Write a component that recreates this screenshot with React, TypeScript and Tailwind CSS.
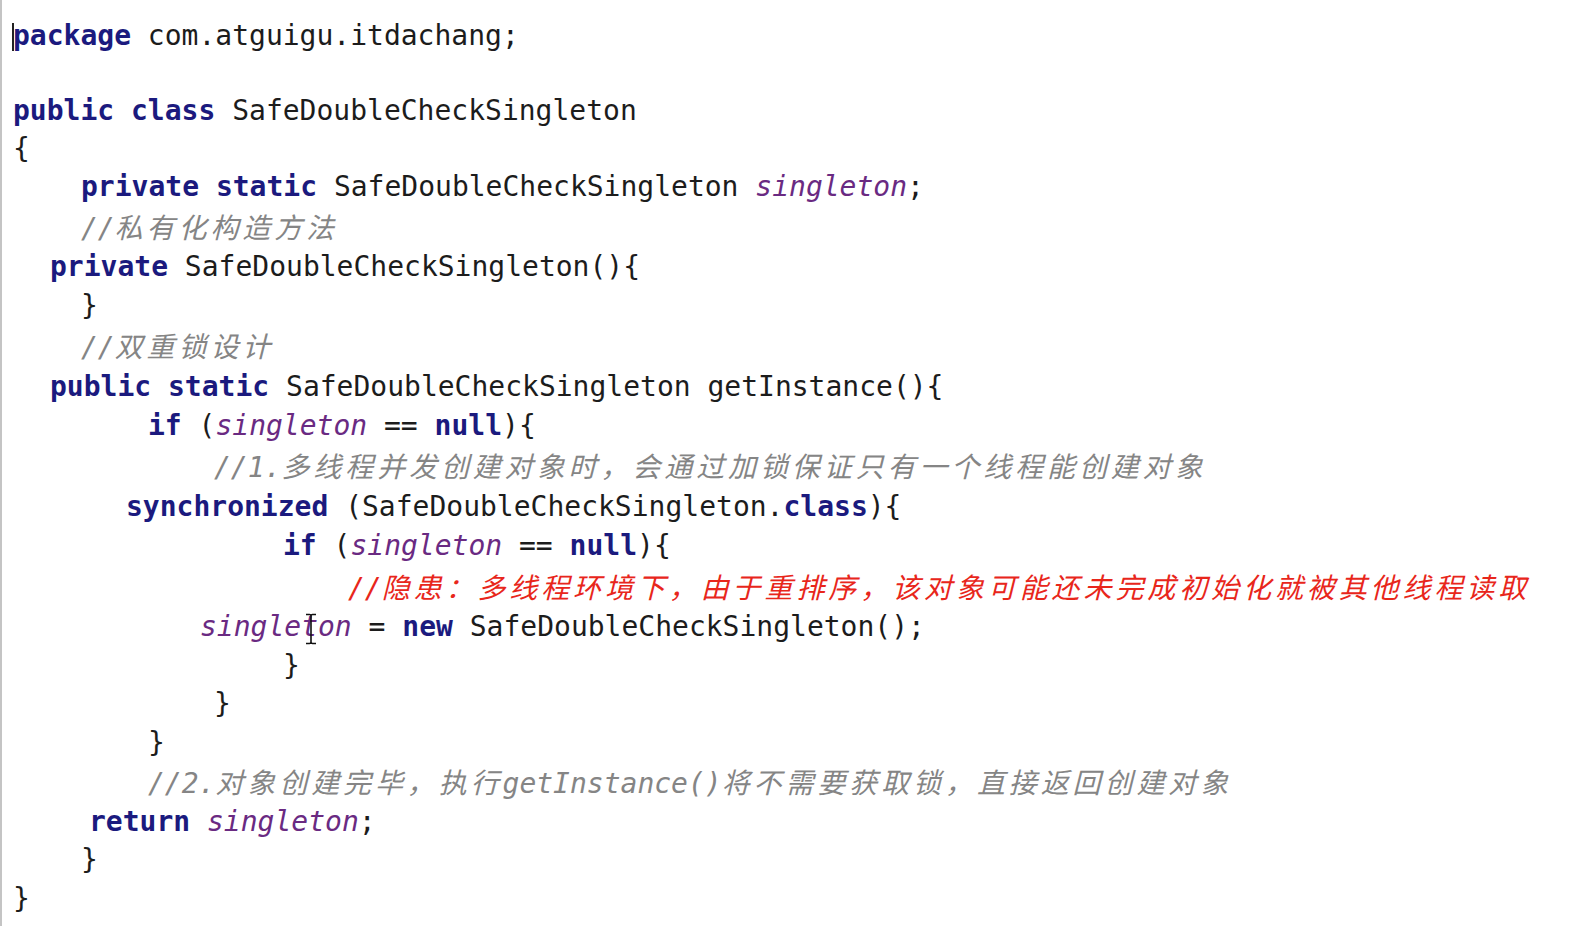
import React from 'react';

type Kind = 'kw' | 'fld' | 'cm' | 'red' | 'pl';
type Tok = [string, Kind];
type Line = { indent: number; y: number; toks: Tok[] };

const KIND_CLASS: Record<Kind, string> = {
  kw: 'font-bold text-[#1b1a7e]',
  fld: 'italic text-[#6a2a82]',
  cm: 'italic text-[#858585]',
  red: 'italic text-[#e8261b]',
  pl: 'text-[#1c1c1c]',
};

// y = vertical centre of each row as measured on the screen
const LINES: Line[] = [
  { indent: 13, y: 36.4, toks: [['package', 'kw'], [' com.atguigu.itdachang;', 'pl']] },
  { indent: 13, y: 73.8, toks: [] },
  { indent: 13, y: 111.2, toks: [['public', 'kw'], [' ', 'pl'], ['class', 'kw'], [' SafeDoubleCheckSingleton', 'pl']] },
  { indent: 13, y: 149.6, toks: [['{', 'pl']] },
  { indent: 81, y: 186, toks: [['private', 'kw'], [' ', 'pl'], ['static', 'kw'], [' SafeDoubleCheckSingleton ', 'pl'], ['singleton', 'fld'], [';', 'pl']] },
  { indent: 81, y: 228.4, toks: [['//私有化构造方法', 'cm']] },
  { indent: 50, y: 266.9, toks: [['private', 'kw'], [' SafeDoubleCheckSingleton(){', 'pl']] },
  { indent: 81, y: 305.3, toks: [['}', 'pl']] },
  { indent: 81, y: 347.7, toks: [['//双重锁设计', 'cm']] },
  { indent: 50, y: 387.1, toks: [['public', 'kw'], [' ', 'pl'], ['static', 'kw'], [' SafeDoubleCheckSingleton getInstance(){', 'pl']] },
  { indent: 148, y: 425.6, toks: [['if', 'kw'], [' (', 'pl'], ['singleton', 'fld'], [' == ', 'pl'], ['null', 'kw'], ['){', 'pl']] },
  { indent: 214, y: 468, toks: [['//1.多线程并发创建对象时，会通过加锁保证只有一个线程能创建对象', 'cm']] },
  { indent: 126, y: 506.4, toks: [['synchronized', 'kw'], [' (SafeDoubleCheckSingleton.', 'pl'], ['class', 'kw'], ['){', 'pl']] },
  { indent: 283, y: 545.8, toks: [['if', 'kw'], [' (', 'pl'], ['singleton', 'fld'], [' == ', 'pl'], ['null', 'kw'], ['){', 'pl']] },
  { indent: 348, y: 588.3, toks: [['//隐患：多线程环境下，由于重排序，该对象可能还未完成初始化就被其他线程读取', 'red']] },
  { indent: 200, y: 626.7, toks: [['singleton', 'fld'], [' = ', 'pl'], ['new', 'kw'], [' SafeDoubleCheckSingleton();', 'pl']] },
  { indent: 283, y: 666.1, toks: [['}', 'pl']] },
  { indent: 214, y: 704.5, toks: [['}', 'pl']] },
  { indent: 148, y: 742.9, toks: [['}', 'pl']] },
  { indent: 148, y: 783.4, toks: [['//2.对象创建完毕，执行getInstance()将不需要获取锁，直接返回创建对象', 'cm']] },
  { indent: 89, y: 821.8, toks: [['return', 'kw'], [' ', 'pl'], ['singleton', 'fld'], [';', 'pl']] },
  { indent: 81, y: 860.2, toks: [['}', 'pl']] },
  { indent: 13, y: 898.6, toks: [['}', 'pl']] },
];

// row boundaries halfway between neighbouring centres
const bounds = LINES.map((l, i) => {
  const prev = i === 0 ? l.y - 19.6 : (LINES[i - 1].y + l.y) / 2;
  const next = i === LINES.length - 1 ? l.y + 19.6 : (l.y + LINES[i + 1].y) / 2;
  return { top: prev, h: next - prev };
});

const CJK = /([\u3000-\u303f\u4e00-\u9fff\uff00-\uffef]+)/;

// comments mix mono latin with wide CJK runs
const Runs: React.FC<{ text: string }> = ({ text }) => (
  <>
    {text.split(CJK).filter(Boolean).map((part, i) =>
      CJK.test(part) ? (
        <span key={i} className="font-['Noto_Sans_CJK_SC',sans-serif] text-[28px] tracking-[3.9px]">{part}</span>
      ) : (
        <span key={i}>{part}</span>
      )
    )}
  </>
);

export default function App() {
  return (
    <div className="relative w-[1585px] h-[926px] bg-white overflow-hidden font-['DejaVu_Sans_Mono',monospace] text-[28px]">
      {/* editor left border */}
      <div className="absolute left-0 top-0 h-full w-[2px] bg-[#c4c4c4]" />

      <div style={{ paddingTop: bounds[0].top }}>
        {LINES.map((line, idx) => (
          <div
            key={idx}
            className="relative flex items-center whitespace-pre leading-none"
            style={{ paddingLeft: line.indent, height: bounds[idx].h }}
          >
            {idx === 0 && <span className="absolute left-[12px] top-[6px] h-[28px] w-[2px] bg-[#222]" />}
            {line.toks.map(([text, kind], i) => (
              <span key={i} className={KIND_CLASS[kind]}>
                {kind === 'cm' || kind === 'red' ? <Runs text={text} /> : text}
              </span>
            ))}
          </div>
        ))}
      </div>

      {/* mouse I-beam cursor */}
      <svg className="absolute left-[304px] top-[613px]" width="14" height="32" viewBox="0 0 14 32">
        <path d="M2 1.5h3.5c1 0 1.5.5 1.5 1.5v26c0 1-.5 1.5-1.5 1.5H2M12 1.5H8.5c-1 0-1.5.5-1.5 1.5v26c0 1 .5 1.5 1.5 1.5H12" fill="none" stroke="#111" strokeWidth="1.6" />
      </svg>
    </div>
  );
}
